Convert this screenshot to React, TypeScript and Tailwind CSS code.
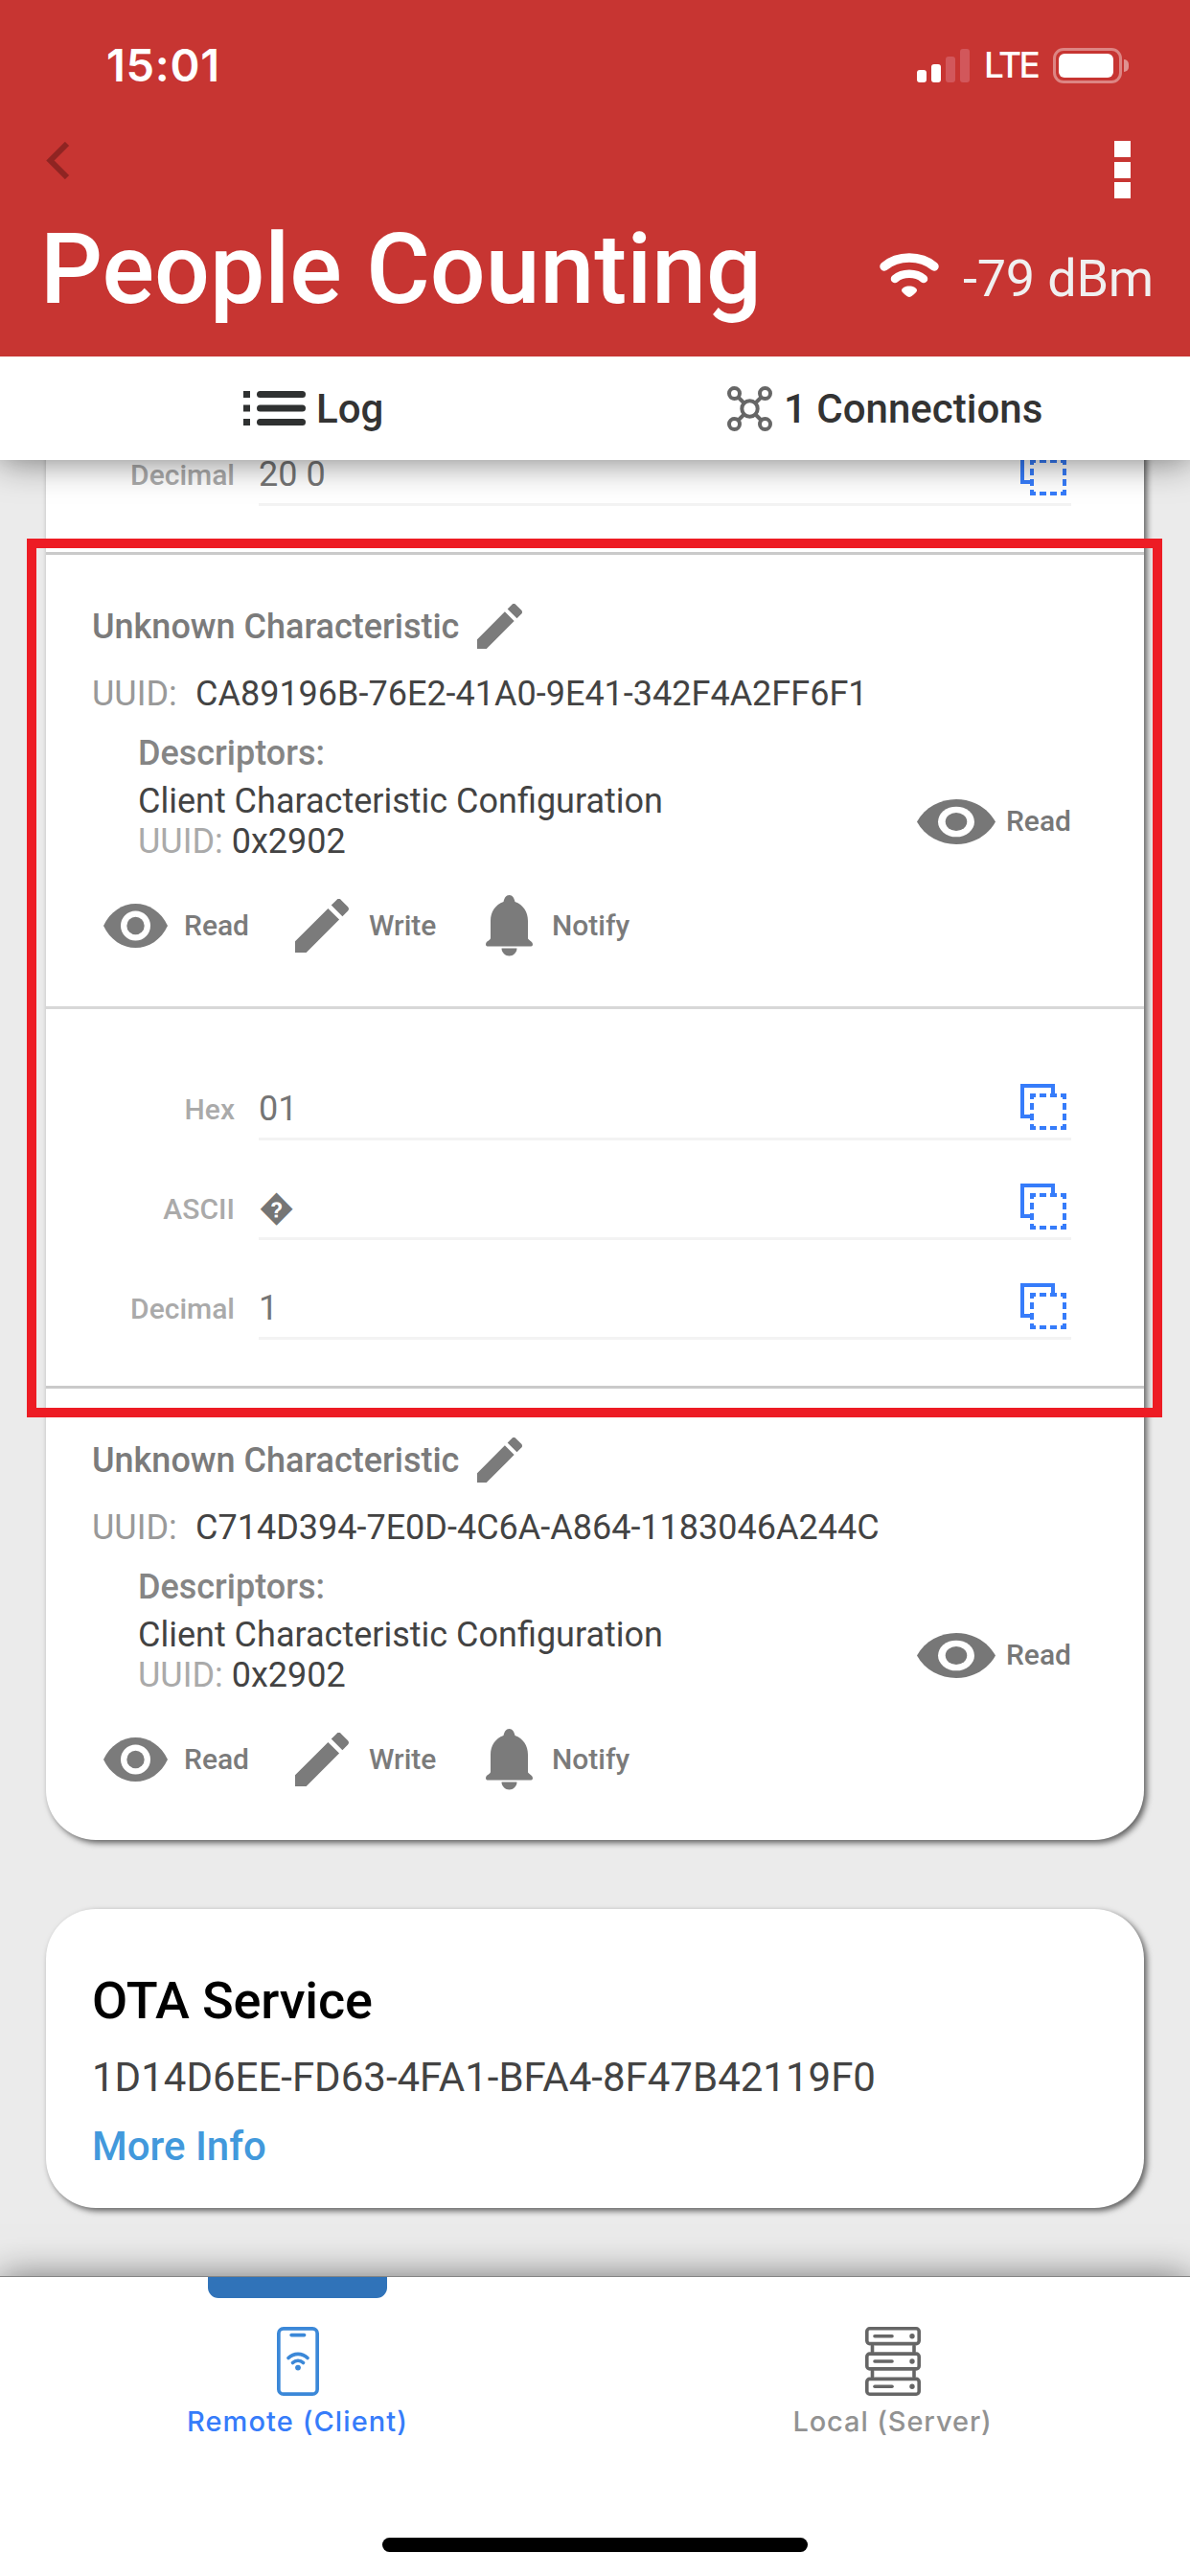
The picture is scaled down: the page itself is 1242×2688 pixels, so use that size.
import React from "react";

const ROBOTO = "font-['Roboto','Liberation_Sans',sans-serif]";
const INTER = "font-['Inter','Liberation_Sans',sans-serif]";

function EyeIcon({ className }: { className: string }) {
  return (
    <svg className={className} viewBox="0 0 67 46" preserveAspectRatio="none" fill="currentColor">
      <path d="M0 23C7 8 20 0 33.500 0S60 8 67 23C60 38 47 46 33.500 46S7 38 0 23Z" />
      <circle cx="33.500" cy="23" r="15.500" fill="#fff" />
      <circle cx="33.500" cy="23" r="9.200" />
    </svg>
  );
}

function PencilIcon({ className }: { className: string }) {
  return (
    <svg className={className} viewBox="3 3 18 18" fill="currentColor">
      <path d="M3 17.250V21h3.750L17.810 9.940l-3.750-3.750L3 17.250zM20.710 7.040c.39-.39.39-1.020 0-1.410l-2.340-2.340a.996.996 0 0 0-1.410 0l-1.830 1.830 3.750 3.750 1.830-1.830z" />
    </svg>
  );
}

function BellIcon() {
  return (
    <svg className="h-[64px] w-[49px]" viewBox="0 0 49 64" fill="currentColor">
      <path d="M24.500 0C28 0 29.500 3 30.500 7C39 10 44 17.500 44 27V45C44 47 49 48 49 51.500C49 53 48 53.500 46.500 53.500H2.500C1 53.500 0 53 0 51.500C0 48 5 47 5 45V27C5 17.500 10 10 18.500 7C19.500 3 21 0 24.500 0Z" />
      <path d="M16.500 55.500H32.500C32.500 60 28.500 63.500 24.500 63.500S16.500 60 16.500 55.500Z" />
    </svg>
  );
}

function CopyIcon() {
  return (
    <svg className="h-12 w-12 text-[#367cfa]" viewBox="0 0 48 48" fill="none" stroke="currentColor" strokeWidth="4">
      <path d="M12 34H2V2H34V12" />
      <rect x="12" y="12" width="34" height="34" strokeDasharray="8 4 7 4 7 4" strokeDashoffset="4" />
      <path d="M10 12H14" />
    </svg>
  );
}

function StatusBar() {
  return (
    <div className={`flex h-[136px] items-center justify-between pl-[111px] pr-[64px] text-white ${INTER}`}>
      <span className="text-[47px] leading-[60px] font-semibold tracking-[0.700px]">15:01</span>
      <div className="flex items-center">
        <div className="flex h-[35px] items-end gap-[5px]">
          <div className="h-[13px] w-[10px] rounded-[3px] bg-white" />
          <div className="h-[19px] w-[10px] rounded-[3px] bg-white" />
          <div className="h-[27px] w-[10px] rounded-[3px] bg-[#d2575b]" />
          <div className="h-[35px] w-[10px] rounded-[3px] bg-[#d2575b]" />
        </div>
        <span className="ml-[15px] w-[55px] text-[37px] leading-[48px] font-medium tracking-[-2.500px] whitespace-nowrap">LTE</span>
        <div className="ml-[17px] flex h-[37px] w-[72px] items-center rounded-[11px] border-[3px] border-[#dd8583] p-[3px]">
          <div className="h-[25px] w-[57px] rounded-[6px] bg-white" />
        </div>
        <div className="ml-[2px] h-[13px] w-[5px] rounded-r-full bg-[#e09290]" />
      </div>
    </div>
  );
}

function Header() {
  return (
    <header className="relative z-20 h-[372px] shrink-0 bg-[#c73532]">
      <StatusBar />
      <div className="flex h-[86px] items-start justify-between pt-[11px] pr-[62px] pl-[48px]">
        <svg className="mt-px h-[39px] w-[25px]" viewBox="0 0 25 39" fill="none" stroke="#8f2422" strokeWidth="6">
          <path d="M22 2L4.500 19.500L22 37" />
        </svg>
        <div className="flex flex-col gap-[4.500px]">
          <div className="h-[17px] w-[17px] bg-white" />
          <div className="h-[17px] w-[17px] bg-white" />
          <div className="h-[17px] w-[17px] bg-white" />
        </div>
      </div>
      <div className="flex items-start justify-between pr-[38px] pl-[42px] text-white">
        <h1 className="mt-px text-[102px] leading-[116px] font-medium whitespace-nowrap">People Counting</h1>
        <div className="flex items-center pt-[33px]">
          <svg className="mt-[-8px] h-[47px] w-[62px]" viewBox="0 0 62 47" fill="none" stroke="#fff" strokeLinecap="round">
            <path d="M5 14C19 2 43 2 57 14" strokeWidth="9.500" />
            <path d="M16 27C24 20 38 20 46 27" strokeWidth="8.500" />
            <path d="M31 34.500C35 34.500 39 36.500 39 39C39 41 33 46 31 46S23 41 23 39C23 36.500 27 34.500 31 34.500Z" fill="#fff" stroke="none" />
          </svg>
          <span className="ml-[25px] text-[54px] leading-[72px] tracking-[-0.200px] whitespace-nowrap text-[#f0f0f0]">-79 dBm</span>
        </div>
      </div>
    </header>
  );
}

function TabBar() {
  return (
    <nav className="relative z-10 grid h-[108px] shrink-0 grid-cols-2 bg-white text-[42px] leading-[52px] font-medium text-[#333] shadow-[0_0_38px_rgba(0,0,0,0.55)]">
      <div className="flex items-center pl-[254px]">
        <svg className="h-[36px] w-[65px]" viewBox="0 0 65 36" fill="#2f3131">
          {[0, 14.5, 29].map((y) => (
            <g key={y}>
              <rect x="0" y={y} width="7" height="7" />
              <rect x="14" y={y} width="51" height="7" rx="3.500" />
            </g>
          ))}
        </svg>
        <span className="mt-[2px] ml-[11px]">Log</span>
      </div>
      <div className="flex items-center pl-[138px]">
        <svg className="h-[47px] w-[47px]" viewBox="0 0 47 47" fill="none" stroke="#666" strokeWidth="4">
          <circle cx="23.500" cy="23.500" r="8.200" />
          <circle cx="7.500" cy="7.500" r="5.500" />
          <circle cx="39.500" cy="7.500" r="5.500" />
          <circle cx="7.500" cy="39.500" r="5.500" />
          <circle cx="39.500" cy="39.500" r="5.500" />
          <path d="M11.500 11.500L17.500 17.500M35.500 11.500L29.500 17.500M11.500 35.500L17.500 29.500M35.500 35.500L29.500 29.500" />
        </svg>
        <span className="mt-[2px] ml-[12px] whitespace-nowrap">1 Connections</span>
      </div>
    </nav>
  );
}

function ValueRow({ label, value }: { label: string; value: string }) {
  return (
    <div className="flex h-[104px] pr-[76px]">
      <div className="flex w-[197px] items-end justify-end pb-[11px]">
        <span className="text-[30px] leading-[42px] font-medium text-[#aaa]">{label}</span>
      </div>
      <div className="ml-[25px] flex flex-1 items-end justify-between border-b-3 border-[#f3f3f3] pr-[5px] pb-[8px]">
        <span className="mb-px text-[36px] leading-[42px] text-[#757575]">{value}</span>
        <CopyIcon />
      </div>
    </div>
  );
}

function Characteristic({ uuid }: { uuid: string }) {
  return (
    <section className="h-[474px] border-t-3 border-[#cacaca] pt-[51px] pl-[48px] text-[36px] leading-[42px]">
      <div className="flex h-[46px] items-center text-[#7b7b7b]">
        <span className="mt-[2px] w-[402px] font-medium whitespace-nowrap">Unknown Characteristic</span>
        <PencilIcon className="h-[47px] w-[47px]" />
      </div>
      <div className="mt-[27px] flex">
        <span className="w-[108px] text-[#999]">UUID:</span>
        <span className="whitespace-nowrap text-[#434343]">{uuid}</span>
      </div>
      <div className="mt-[20px] pl-[48px]">
        <div className="font-medium text-[#858585]">Descriptors:</div>
        <div className="mt-[8px] flex items-center justify-between pr-[76px]">
          <div className="text-[#434343]">
            <div>Client Characteristic Configuration</div>
            <div>
              <span className="text-[#aaa]">UUID:</span> 0x2902
            </div>
          </div>
          <div className="flex items-center text-[30px] font-medium text-[#777]">
            <EyeIcon className="h-[47px] w-[82px]" />
            <span className="ml-[11px]">Read</span>
          </div>
        </div>
      </div>
      <div className="mt-[35px] flex h-[64px] items-center pl-[12px] text-[30px] font-medium text-[#7b7b7b]">
        <EyeIcon className="h-[46px] w-[67px]" />
        <span className="ml-[17px] w-[116px]">Read</span>
        <PencilIcon className="h-[56px] w-[56px]" />
        <span className="ml-[21px] w-[122px]">Write</span>
        <BellIcon />
        <span className="ml-[20px]">Notify</span>
      </div>
    </section>
  );
}

const CARD = "mx-[48px] bg-white shadow-[3px_3px_6px_rgba(0,0,0,0.6)]";

function BottomBar() {
  return (
    <footer className={`relative z-10 h-[313px] shrink-0 border-t border-[#858585] bg-white text-[29px] leading-[40px] font-medium tracking-[1.100px] shadow-[0_0_36px_rgba(0,0,0,0.5)] ${INTER}`}>
      <div className="grid h-[272px] grid-cols-2">
        <div className="flex flex-col items-center text-[#367cfa]">
          <div className="h-[22px] w-[187px] rounded-b-[11px] bg-[#3073b9]" />
          <svg className="mt-[30px] h-[72px] w-[44px]" viewBox="0 0 44 72" fill="none" stroke="#3b88d8" strokeWidth="3.700" strokeLinecap="round">
            <rect x="1.850" y="1.850" width="40.300" height="68.300" rx="5" />
            <path d="M15.200 8.600H28.500" />
            <path d="M12 32.500C17.500 27 26.500 27 32 32.500" />
            <path d="M16.500 37.500C19.500 34.500 24.500 34.500 27.500 37.500" />
            <circle cx="22" cy="42.600" r="2.900" fill="#3b88d8" stroke="none" />
          </svg>
          <span className="mt-[7px]">Remote (Client)</span>
        </div>
        <div className="flex flex-col items-center pt-[52px] text-[#929292]">
          <svg className="h-[72px] w-[58px]" viewBox="0 0 58 72" fill="none" stroke="#666" strokeWidth="3.600" strokeLinecap="round">
            {[0, 26.3, 52.6].map((y) => (
              <g key={y}>
                <rect x="1.800" y={y + 1.8} width="54.400" height="15.800" rx="3" />
                <path d={`M10 ${y + 9.7}H28`} />
                <circle cx="49" cy={y + 9.7} r="2.700" fill="#666" stroke="none" />
              </g>
            ))}
            <path d="M7.500 20V26M51 20V26M7.500 46V52M51 46V52" />
          </svg>
          <span className="mt-[7px] tracking-[0.900px]">Local (Server)</span>
        </div>
      </div>
      <div className="mx-auto h-[15px] w-[444px] rounded-full bg-black" />
    </footer>
  );
}

export default function App() {
  return (
    <div className={`relative flex h-[2688px] w-[1242px] flex-col overflow-hidden bg-[#ebebeb] ${ROBOTO}`}>
      <Header />
      <TabBar />
      <main className="h-[1895px] shrink-0 overflow-hidden">
        <article className={`mt-[-56px] rounded-b-[52px] ${CARD}`}>
          <ValueRow label="Decimal" value="20 0" />
          <div className="h-[48px]" />
          <Characteristic uuid="CA89196B-76E2-41A0-9E41-342F4A2FF6F1" />
          <div className="border-t-3 border-[#d8d8d8] pt-[33px] pb-[48px]">
            <ValueRow label="Hex" value="01" />
            <ValueRow label="ASCII" value={"\uFFFD"} />
            <ValueRow label="Decimal" value="1" />
          </div>
          <Characteristic uuid="C714D394-7E0D-4C6A-A864-1183046A244C" />
        </article>
        <article className={`mt-[72px] h-[312px] rounded-[52px] pt-[66px] pl-[48px] leading-[60px] ${CARD}`}>
          <h2 className="text-[54px] leading-[60px] font-medium tracking-[-0.150px] text-black">OTA Service</h2>
          <div className="mt-[20px] text-[42px] leading-[60px] text-[#434343]">1D14D6EE-FD63-4FA1-BFA4-8F47B42119F0</div>
          <div className="mt-[12px] text-[42px] leading-[60px] font-medium text-[#4299dc]">More Info</div>
        </article>
      </main>
      <BottomBar />
      <div className="pointer-events-none absolute top-[562px] left-[28px] h-[917px] w-[1185px] border-[10px] border-[#ed1c24]" />
    </div>
  );
}
